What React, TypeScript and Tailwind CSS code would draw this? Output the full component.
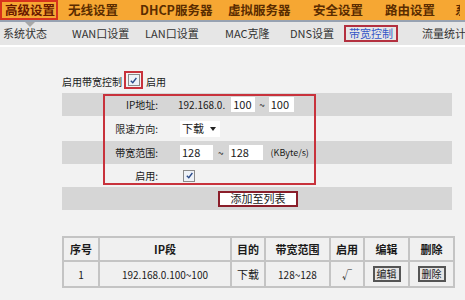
const font = { fontFamily: '"Noto Sans CJK SC", "Liberation Sans", sans-serif' };

const topItems: Array<{ label: string; w: string }> = [
  { label: "高级设置", w: "w-[68px]" },
  { label: "无线设置", w: "w-[72px]" },
  { label: "DHCP服务器", w: "w-[88px]" },
  { label: "虚拟服务器", w: "w-[85px]" },
  { label: "安全设置", w: "w-[72px]" },
  { label: "路由设置", w: "w-[70px]" },
];

const subItems: Array<{ label: string; w: string }> = [
  { label: "系统状态", w: "w-[69px]" },
  { label: "WAN口设置", w: "w-[73px]" },
  { label: "LAN口设置", w: "w-[80px]" },
  { label: "MAC克隆", w: "w-[65px]" },
  { label: "DNS设置", w: "w-[57px]" },
  { label: "带宽控制", w: "w-[75px]" },
  { label: "流量统计", w: "w-[60px]" },
];

function Check() {
  return (
    <span className="inline-flex h-[12px] w-[12px] items-center justify-center border border-[#8a8a8a] bg-[#eef2f8]">
      <svg viewBox="0 0 10 10" className="h-[9px] w-[9px]">
        <path d="M2 5.2 L4.2 7.5 L8.2 2.2" fill="none" stroke="#2a4a8a" strokeWidth="1.5" />
      </svg>
    </span>
  );
}

export default function App() {
  return (
    <div className="h-[300px] w-[465px] overflow-hidden bg-[#f2f2f2] text-[#1a1a1a]" style={font}>
      {/* top nav */}
      <div className="flex h-[20px] items-center overflow-hidden bg-[#f6a733] text-[12.5px] font-bold text-[#5a2c00]">
        {topItems.map(({ label, w }, i) => (
          <div key={label} className={`${w} shrink-0 whitespace-nowrap`}>
            {i === 0 ? (
              <span className="flex h-[20px] w-[58px] items-center border-2 border-[#d8321c] pl-[3px] text-[#6a1a00]">
                {label}
              </span>
            ) : (
              label
            )}
          </div>
        ))}
        <div className="w-[5px] shrink-0 overflow-hidden whitespace-nowrap">系</div>
      </div>
      <div className="h-[2px] bg-[#97a2b2]" />

      {/* sub nav */}
      <div className="relative flex h-[25px] items-center overflow-hidden border-b-2 border-white bg-[#e6e6e6] pl-[3px] text-[11px] text-[#333]">
        <span className="absolute left-[25px] top-0 h-0 w-0 border-x-[5px] border-t-[5px] border-x-transparent border-t-[#a8a8a8]" />
        {subItems.map(({ label, w }) => (
          <div key={label} className={`${w} shrink-0 whitespace-nowrap`}>
            {label === "带宽控制" ? (
              <span className="-ml-[3px] inline-block border-2 border-[#b3303f] px-[3px] leading-[13px] text-[#3456c8]">
                {label}
              </span>
            ) : (
              label
            )}
          </div>
        ))}
      </div>

      {/* content */}
      <div className="pl-[62px] pr-[13px] text-[10px]">
        <div className="flex h-[46px] items-end pb-[4px]">
          <span>启用带宽控制</span>
          <span className="ml-[2px] flex h-[18px] w-[19px] items-center justify-center border-2 border-[#c8323c]">
            <Check />
          </span>
          <span className="ml-[3px]">启用</span>
        </div>

        <div className="relative">
          <div className="flex h-[23px] items-center bg-[#d6d6d6]">
            <span className="w-[96px] text-right">IP地址:</span>
            <span className="ml-[20px]">192.168.0.</span>
            <span className="ml-[6px] h-[15px] w-[24px] bg-white pl-[2px] text-[11px] leading-[15px]">100</span>
            <span className="mx-[4px]">~</span>
            <span className="h-[15px] w-[25px] bg-white pl-[2px] text-[11px] leading-[15px]">100</span>
          </div>
          <div className="flex h-[25px] items-center">
            <span className="w-[96px] text-right">限速方向:</span>
            <span className="ml-[22px] flex h-[16px] w-[40px] items-center justify-between bg-white px-[2px] text-[11px]">
              下载
              <span className="mr-[2px] h-0 w-0 border-x-[3px] border-t-[4px] border-x-transparent border-t-[#222]" />
            </span>
          </div>
          <div className="flex h-[23px] items-center bg-[#d6d6d6]">
            <span className="w-[96px] text-right">带宽范围:</span>
            <span className="ml-[22px] h-[15px] w-[33px] bg-white pl-[2px] text-[11px] leading-[15px]">128</span>
            <span className="mx-[5px]">~</span>
            <span className="h-[15px] w-[34px] bg-white pl-[2px] text-[11px] leading-[15px]">128</span>
            <span className="ml-[8px] text-[9px]">(KByte/s)</span>
          </div>
          <div className="flex h-[23px] items-center">
            <span className="w-[96px] text-right">启用:</span>
            <span className="ml-[25px] flex">
              <Check />
            </span>
          </div>
          <div className="flex h-[23px] items-center bg-[#d6d6d6]">
            <span className="ml-[156px] flex h-[16px] w-[80px] items-center justify-center border-2 border-[#8a1e2a] bg-white text-[11px]">
              添加至列表
            </span>
          </div>
          {/* highlight */}
          <div className="pointer-events-none absolute left-[41px] top-[1px] h-[91px] w-[213px] border-2 border-[#c8323c]" />
        </div>

        <table className="mt-[26px] w-[391px] table-fixed border-collapse border-2 border-[#c4c4c4] text-center text-[10px]">
          <colgroup>
            <col className="w-[36px]" />
            <col className="w-[132px]" />
            <col className="w-[34px]" />
            <col className="w-[65px]" />
            <col className="w-[34px]" />
            <col className="w-[45px]" />
            <col className="w-[45px]" />
          </colgroup>
          <thead>
            <tr className="h-[24px] bg-[#f0f0f0] text-[11px] font-bold">
              {["序号", "IP段", "目的", "带宽范围", "启用", "编辑", "删除"].map((h) => (
                <th key={h} className="border-2 border-[#c4c4c4] p-0">
                  {h}
                </th>
              ))}
            </tr>
          </thead>
          <tbody>
            <tr className="h-[26px] bg-[#f0f0f0]">
              <td className="border-2 border-[#c4c4c4]">1</td>
              <td className="border-2 border-[#c4c4c4]">192.168.0.100~100</td>
              <td className="border-2 border-[#c4c4c4] text-[11px]">下载</td>
              <td className="border-2 border-[#c4c4c4]">128~128</td>
              <td className="border-2 border-[#c4c4c4]">√</td>
              <td className="border-2 border-[#c4c4c4]">
                <span className="inline-block border-2 border-[#555] bg-[#e4e4e4] px-[2px] leading-[12px]">编辑</span>
              </td>
              <td className="border-2 border-[#c4c4c4]">
                <span className="inline-block border-2 border-[#555] bg-[#e4e4e4] px-[2px] leading-[12px]">删除</span>
              </td>
            </tr>
          </tbody>
        </table>
      </div>
    </div>
  );
}
